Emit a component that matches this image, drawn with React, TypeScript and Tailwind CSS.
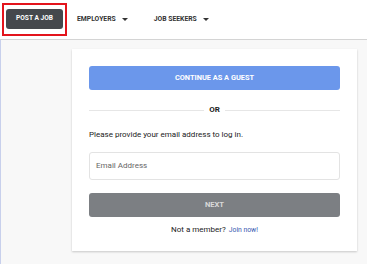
import React from "react";

function Caret() {
  return (
    <svg width="6" height="3" viewBox="0 0 6 3" className="ml-[6px]">
      <path d="M0 0 L6 0 L3 3 Z" fill="#333" />
    </svg>
  );
}

export default function App() {
  return (
    <div className="w-[367px] h-[264px] overflow-hidden bg-[#f8f8f8] font-['Roboto',sans-serif]">
      <header className="h-[40px] bg-white border-b border-[#d4d4d4] flex items-start">
        <div className="ml-[2px] mt-[3px] w-[65px] h-[33px] border-2 border-[#e3141c] flex items-center justify-center">
          <div className="w-[57px] h-[20px] mt-[-1px] rounded-[3px] bg-[#45484d] flex items-center justify-center text-white text-[6.6px] font-bold">
            POST A JOB
          </div>
        </div>
        <div className="ml-[10px] h-[38px] flex items-center text-[6.8px] font-bold text-[#333]">
          EMPLOYERS
          <Caret />
        </div>
        <div className="ml-[26px] h-[38px] flex items-center text-[6.8px] font-bold text-[#333]">
          JOB SEEKERS
          <Caret />
        </div>
      </header>
      <main className="h-[224px] border-l border-[#c8d0ec] pt-[9px]">
        <div className="ml-[71px] w-[285px] bg-white shadow-[0_1px_2px_rgba(0,0,0,0.2)] px-[17px] pt-[17px] pb-[14px]">
          <button className="w-full h-[24px] rounded-[3px] bg-[#6b97eb] text-white text-[7.4px] font-bold flex items-center justify-center">
            CONTINUE AS A GUEST
          </button>
          <div className="mt-[14px] flex items-center h-[12px]">
            <div className="flex-1 h-px bg-[#e6e6e6]" />
            <span className="px-[5px] text-[8px] font-bold text-[#222]">OR</span>
            <div className="flex-1 h-px bg-[#e6e6e6]" />
          </div>
          <p className="mt-[12px] text-[8px] text-[#222] leading-[14px]">
            Please provide your email address to log in.
          </p>
          <div className="mt-[10px] h-[28px] border border-[#e3e3e3] rounded-[3px] flex items-center px-[6px] text-[8px] text-[#666]">
            Email Address
          </div>
          <button className="mt-[13px] w-full h-[24px] rounded-[3px] bg-[#7c7f83] text-[#d9d9d9] text-[7.6px] font-bold flex items-center justify-center">
            NEXT
          </button>
          <div className="mt-[6px] flex items-center justify-center text-[8px] text-[#222] leading-[14px]">
            Not a member?
            <span className="ml-[3px] text-[6.8px] text-[#3558b0]">Join now!</span>
          </div>
        </div>
      </main>
    </div>
  );
}
